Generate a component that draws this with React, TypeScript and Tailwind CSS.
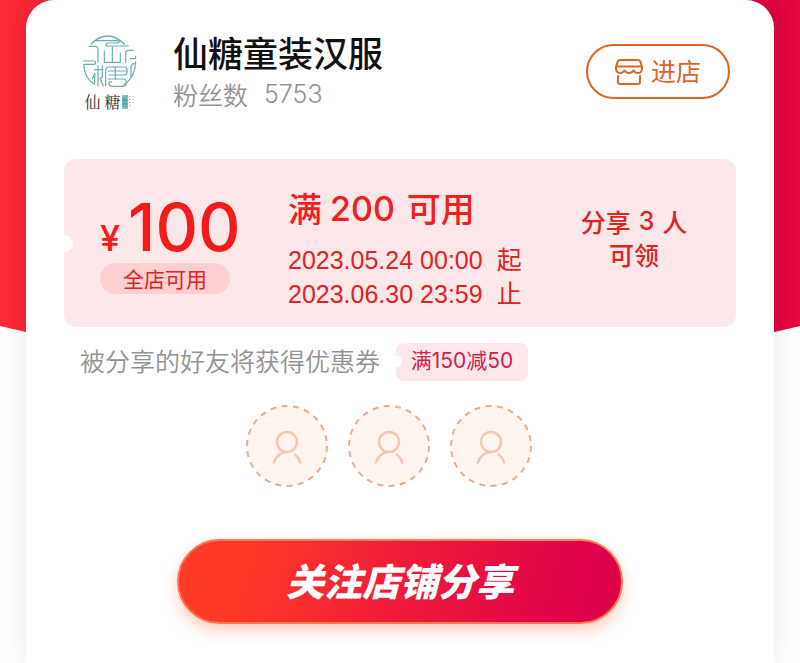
const CJK = "font-['Noto_Sans_CJK_SC',sans-serif]";
const ARIAL = "font-['Liberation_Sans','Noto_Sans_CJK_SC',sans-serif]";
const INTER = "font-['Inter','Noto_Sans_CJK_SC',sans-serif]";

function Backdrop() {
  return (
    <svg
      className="absolute inset-x-0 top-0 -z-10 h-[360px] w-full"
      viewBox="0 0 800 360"
      preserveAspectRatio="none"
      aria-hidden="true"
    >
      <defs>
        <linearGradient id="backdrop" x1="0" y1="0" x2="1" y2="0">
          <stop offset="0" stopColor="#fb2a33" />
          <stop offset="0.05" stopColor="#f22436" />
          <stop offset="0.97" stopColor="#dc0340" />
          <stop offset="1" stopColor="#ea0842" />
        </linearGradient>
      </defs>
      <path d="M0 0H800V326Q400 424 0 326Z" fill="url(#backdrop)" />
    </svg>
  );
}

function ShopLogo() {
  return (
    <div className="flex w-15 flex-col items-center">
      <svg
        className="size-15"
        viewBox="0 0 180 180"
        fill="none"
        stroke="#6badb0"
        strokeWidth="3.6"
        strokeLinecap="round"
        strokeLinejoin="round"
        role="img"
        aria-label="仙糖"
      >
        <path d="M36 36Q86 -12 136 36" />
        <path d="M52 26H116Q122 26 121 30Q120 33 114 33H88Q81 33 81 38Q81 42 88 42H148" />
        <path d="M30 43H48Q57 43 57 52V89" />
        <path d="M76 57V91H124V63M100 45V91" />
        <path d="M163 55H149Q140 55 140 64V91" />
        <path d="M154 80H166Q171 80 170 73" />
        <path d="M14 87H44Q50 87 50 92Q50 97 44 97H14Q17 142 47 157V125" />
        <path d="M57 101V162M47 125L40 141M47 113H72M70 101V131Q70 139 62 139M64 141L73 162" />
        <path d="M80 162V115Q80 105 90 105H136Q144 105 144 113V121Q144 129 136 129H90" />
        <path d="M109 105V141M88 117H144" />
        <path d="M88 141H132Q142 141 142 151Q142 163 132 163H98Q90 163 90 154Q90 149 98 149" />
        <path d="M170 89Q169 135 134 159M156 105V133M166 95Q157 95 156 105" />
      </svg>
      <div className="flex items-center gap-px">
        <span className="font-['Noto_Serif_CJK_SC','Noto_Sans_CJK_SC',serif] text-[16px] leading-[20px] text-[#333]">
          仙 糖
        </span>
        <svg className="h-4 w-3" viewBox="0 0 12 16" fill="none" aria-hidden="true">
          <path d="M0 1H6V15H0Z" fill="#8bc5c8" />
          <path d="M2 3V13M4 2V14M0 6H6M0 10H6" stroke="#459da5" />
          <path d="M8 2V12M11 2V10" stroke="#9a9a9a" strokeDasharray="1 2" />
        </svg>
      </div>
    </div>
  );
}

function StoreIcon() {
  return (
    <svg
      className="h-[26px] w-[28px]"
      viewBox="0 0 28 26"
      fill="none"
      stroke="currentColor"
      strokeWidth="2"
      strokeLinecap="round"
      strokeLinejoin="round"
      aria-hidden="true"
    >
      <path d="M5 1H23Q25 1 25.500 3L27 8V10Q26.500 14 23 14Q20 14 18.500 11.500Q17 14 14 14Q11 14 9.500 11.500Q8 14 5 14Q1.500 14 1 10V8L2.500 3Q3 1 5 1Z" />
      <path d="M1.500 7.500H26.500" />
      <path d="M3 17V23Q3 25 5 25H23Q25 25 25 23V17" />
    </svg>
  );
}

function FriendSlot() {
  return (
    <li>
      <svg className="size-[82px]" viewBox="0 0 82 82" fill="none" role="img" aria-label="好友">
        <circle cx="41" cy="41" r="40" fill="#fff5f0" stroke="#e5ad88" strokeWidth="2" strokeDasharray="6 5.424" />
        <g stroke="#f5c5ad" strokeWidth="2.4">
          <circle cx="41" cy="37" r="10" />
          <path d="M27.500 58.500Q31 47.500 41 47M48 49Q53 52.500 54.500 58.500" />
        </g>
      </svg>
    </li>
  );
}

export default function App() {
  return (
    <div className={`relative isolate min-h-screen overflow-hidden bg-[#fefefe] ${CJK}`}>
      <Backdrop />
      <main className="mx-[26px] min-h-screen rounded-t-[28px] bg-white px-[38px] shadow-[0_0_20px_rgba(0,0,0,0.08)]">
        <header className="flex h-[159px] items-start pt-8 pr-1.5 pl-[15px]">
          <ShopLogo />
          <div className="ml-[34px] flex-1">
            <h1 className="text-[35px] leading-[40px] font-medium text-[#111]">仙糖童装汉服</h1>
            <p className="mt-1 flex items-center gap-4 text-[25px] leading-[36px] font-[350] text-[#929292]">
              <span>粉丝数</span>
              <span className={INTER}>5753</span>
            </p>
          </div>
          <button
            type="button"
            className="mt-3 flex h-[55px] w-[144px] items-center justify-center gap-2 rounded-full border-2 border-[#dc6529] text-[25px] leading-[34px] text-[#dc6529]"
          >
            <StoreIcon />
            <span className="pb-1">进店</span>
          </button>
        </header>

        <section className="relative flex h-[168px] overflow-hidden rounded-xl bg-[#fde8e9] pl-9 text-[#e02222]">
          <span className="absolute top-[76px] -left-2 size-[17px] rounded-full bg-white" />
          <div className="w-[188px] pt-9">
            <p
              className={`flex h-[64px] items-baseline gap-2 leading-[64px] font-medium text-[#f51b1b] ${INTER}`}
            >
              <span className="text-[36px]">¥</span>
              <span className="text-[66px]">100</span>
            </p>
            <p className="mt-1 h-[31px] w-[130px] rounded-full bg-[#ffcfd1] text-center text-[21px] leading-[30px]">
              全店可用
            </p>
          </div>
          <div className="flex-1 pt-[26px]">
            <h2 className="flex items-center gap-2 text-[34px] leading-[44px] font-medium text-[#f02020]">
              <span>满</span>
              <span className={`pt-0.5 ${INTER}`}>200</span>
              <span className="pl-1">可用</span>
            </h2>
            <div className={`mt-3 text-[25px] leading-[34px] ${ARIAL}`}>
              <p className="flex gap-3.5">
                <span>2023.05.24 00:00</span>
                <span>起</span>
              </p>
              <p className="flex gap-3.5">
                <span>2023.06.30 23:59</span>
                <span>止</span>
              </p>
            </div>
          </div>
          <div className="w-[204px] pt-[46px] text-center text-[25px] leading-[33px] font-medium">
            <p className="flex justify-center gap-2">
              <span>分享</span>
              <span className={INTER}>3</span>
              <span>人</span>
            </p>
            <p>可领</p>
          </div>
        </section>

        <div className="mt-4 flex items-center gap-4 pl-4">
          <p className="pb-1 text-[25px] leading-[34px] font-[350] text-[#929292]">被分享的好友将获得优惠券</p>
          <span
            className={`relative h-[38px] w-[132px] overflow-hidden rounded-lg bg-[#fee7ea] text-center text-[21px] leading-[36px] text-[#d01f48] ${INTER}`}
          >
            <span className="absolute top-3 -left-1.5 size-3 rounded-full bg-white" />
            满150减50
          </span>
        </div>

        <ul className="mt-6 flex justify-center gap-5 pr-[22px]">
          <FriendSlot />
          <FriendSlot />
          <FriendSlot />
        </ul>

        <button
          type="button"
          className="mx-auto mt-[52px] block h-[85px] w-[446px] rounded-full border-2 border-[#ff7650] bg-linear-[105deg] from-[#ff3a27] from-15% via-[#f01b39] via-50% to-[#df004b] to-90% bg-origin-border pb-1 text-[38px] leading-[77px] font-black text-white italic shadow-[0_7px_14px_rgba(255,90,40,0.3)]"
        >
          关注店铺分享
        </button>
      </main>
    </div>
  );
}
